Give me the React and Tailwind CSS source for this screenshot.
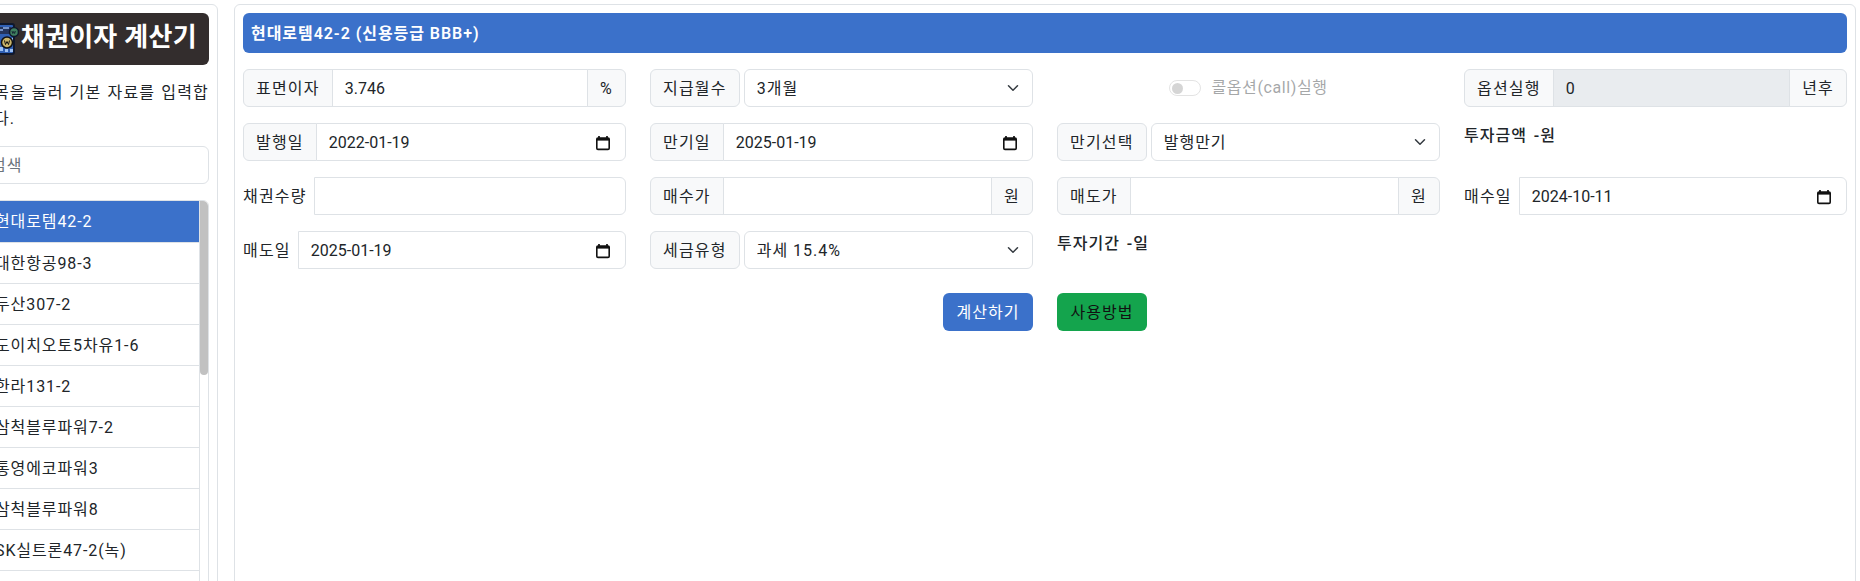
const BONDS = ["현대로템42-2", "대한항공98-3", "두산307-2", "도이치오토5차유1-6", "한라131-2", "삼척블루파워7-2", "통영에코파워3", "삼척블루파워8", "SK실트론47-2(녹)", "한화솔루션283-2"];

const box = "h-[38px] border border-[#dee2e6] bg-white pt-px";
const addon = "flex h-[38px] shrink-0 items-center border border-[#dee2e6] bg-[#f8f9fa] px-3 pt-px tracking-[1.2px]";

function CalendarIcon() {
  return (
    <svg width="16" height="16" viewBox="0 0 16 16" className="shrink-0">
      <path d="M4 1v2M12 1v2" stroke="#000" strokeWidth="1.6" />
      <rect x="1.8" y="3" width="12.4" height="11.4" rx="1.2" fill="none" stroke="#111" strokeWidth="1.6" />
      <rect x="1.8" y="3" width="12.4" height="2.6" fill="#111" />
    </svg>
  );
}

function Chevron() {
  return (
    <svg width="16" height="12" viewBox="0 0 16 16" className="pointer-events-none absolute right-3 top-[13px]">
      <path d="m2 5 6 6 6-6" fill="none" stroke="#343a40" strokeWidth="2" strokeLinecap="round" strokeLinejoin="round" />
    </svg>
  );
}

function Select({ label, value }) {
  return (
    <div className="flex gap-1">
      <span className={addon + " rounded-md"}>{label}</span>
      <div className="relative min-w-0 flex-1">
        <select defaultValue={value} className={box + " w-full appearance-none rounded-md pl-3 pr-9 tracking-[1px] outline-none"}>
          <option>{value}</option>
        </select>
        <Chevron />
      </div>
    </div>
  );
}

function DateBox({ value, className }) {
  return (
    <div className={box + " flex min-w-0 flex-1 items-center justify-between pl-3 pr-[14px] " + className}>
      <input readOnly value={value} className="w-[120px] bg-transparent outline-none" />
      <CalendarIcon />
    </div>
  );
}

function Joined({ label, value, unit, disabled }) {
  return (
    <div className="flex">
      <span className={addon + " rounded-l-md"}>{label}</span>
      <input
        readOnly
        value={value}
        className={"-ml-px h-[38px] min-w-0 flex-1 border border-[#dee2e6] px-3 pt-px outline-none " + (disabled ? "bg-[#e9ecef]" : "bg-white") + (unit ? "" : " rounded-r-md")}
      />
      {unit && <span className={addon + " -ml-px rounded-r-md"}>{unit}</span>}
    </div>
  );
}

function JoinedDate({ label, value }) {
  return (
    <div className="flex">
      <span className={addon + " rounded-l-md"}>{label}</span>
      <DateBox value={value} className="-ml-px rounded-r-md" />
    </div>
  );
}

function Plain({ label, children }) {
  return (
    <div className="flex items-center gap-[7px]">
      <span className="shrink-0 pt-px tracking-[1.2px]">{label}</span>
      {children}
    </div>
  );
}

function Logo() {
  return (
    <svg width="40" height="32" viewBox="0 0 40 32" className="shrink-0">
      <rect x="3" y="1" width="32" height="30" rx="2" fill="#2f5fb3" stroke="#10182c" strokeWidth="2" />
      <rect x="8" y="4" width="24" height="7" fill="#24345c" />
      <path d="M16 7h8M24 5h6" stroke="#8fb0e8" strokeWidth="1.5" />
      <path d="M8 24h4v4H8zM14 24h4v4h-4zM20 24h4v4h-4zM26 26h3v3h-3zM31 26h3v3h-3zM31 15h3v4h-3z" fill="#9cc0f2" />
      <circle cx="28" cy="19.500" r="5.500" fill="#c9b46a" stroke="#111" strokeWidth="1.500" />
      <path d="M25.500 17.500l1 4 1.500-3 1.500 3 1-4" fill="none" stroke="#111" strokeWidth="1" />
      <circle cx="35" cy="9" r="4.500" fill="#3f7f5f" stroke="#10182c" strokeWidth="1.500" />
      <path d="M33 8l.8 2.500.9-2 .9 2 .8-2.500" fill="none" stroke="#10182c" strokeWidth="0.8" />
    </svg>
  );
}

function Sidebar() {
  return (
    <aside className="-ml-[31px] h-[700px] w-[249px] shrink-0 rounded-md border border-[#dee2e6] bg-white p-2">
      <div className="flex h-[52px] items-center justify-end rounded-md bg-[#332d2d] pr-[12px]">
        <Logo />
        <span className="mb-[3px] ml-[2px] whitespace-nowrap text-[26px] font-bold tracking-[0.3px] text-white">채권이자 계산기</span>
      </div>
      <p className="mt-[15px] text-justify leading-[26px] tracking-[1.2px]">항목을 눌러 기본 자료를 입력합니다.</p>
      <input placeholder="검색" className={box + " mt-[14px] block w-full rounded-md px-3 tracking-[1px] outline-none placeholder:text-[#6c757d]"} />
      <div className="mt-4 flex overflow-hidden rounded-md border border-[#dee2e6]">
        <ul className="min-w-0 flex-1 border-r border-[#dee2e6]">
          {BONDS.map((b, i) => (
            <li
              key={b}
              className={"border-b border-[#dee2e6] px-4 pb-2 pt-[9px] tracking-[0.9px] " + (i === 0 ? "h-[42px] bg-[#3b71ca] text-white" : "h-[41px]")}
            >
              {b}
            </li>
          ))}
        </ul>
        <div className="w-2 shrink-0 bg-white">
          <div className="h-[174px] rounded-b-md bg-[#c1c1c1]" />
        </div>
      </div>
    </aside>
  );
}

export default function App() {
  return (
    <div className="flex h-[581px] gap-4 overflow-hidden bg-white pt-1 font-['Roboto','Noto_Sans_CJK_KR',sans-serif] text-base text-[#212529]">
      <Sidebar />
      <main className="mr-1 h-[700px] min-w-0 flex-1 rounded-md border border-[#dee2e6] bg-white p-2">
        <div className="flex h-10 items-center rounded-md bg-[#3b71ca] px-2 pt-px font-semibold tracking-[0.95px] text-white">
          현대로템42-2 (신용등급 BBB+)
        </div>
        <div className="mt-4 grid grid-cols-4 gap-x-6 gap-y-4">
          <Joined label="표면이자" value="3.746" unit="%" />
          <Select label="지급월수" value="3개월" />
          <div className="flex items-center justify-center gap-[10px] opacity-40">
            <span className="flex h-4 w-8 items-center rounded-full border border-[#bbb] px-[2px]">
              <span className="h-[11px] w-[11px] rounded-full bg-[#999]" />
            </span>
            <span className="tracking-[0.6px]">콜옵션(call)실행</span>
          </div>
          <Joined label="옵션실행" value="0" unit="년후" disabled />

          <JoinedDate label="발행일" value="2022-01-19" />
          <JoinedDate label="만기일" value="2025-01-19" />
          <Select label="만기선택" value="발행만기" />
          <div className="h-[38px] pt-px font-medium tracking-[1px] [word-spacing:2px]">투자금액 -원</div>

          <Plain label="채권수량">
            <input className={box + " min-w-0 flex-1 rounded-r-md outline-none"} />
          </Plain>
          <Joined label="매수가" value="" unit="원" />
          <Joined label="매도가" value="" unit="원" />
          <Plain label="매수일">
            <DateBox value="2024-10-11" className="rounded-r-md" />
          </Plain>

          <Plain label="매도일">
            <DateBox value="2025-01-19" className="rounded-r-md" />
          </Plain>
          <Select label="세금유형" value="과세 15.4%" />
          <div className="h-[38px] pt-px font-medium tracking-[1px] [word-spacing:2px]">투자기간 -일</div>
          <div />

          <div />
          <div className="mt-2 flex justify-end">
            <button className="h-[38px] w-[90px] rounded-md bg-[#3b71ca] pt-px tracking-[1px] text-white">계산하기</button>
          </div>
          <div className="mt-2">
            <button className="h-[38px] w-[90px] rounded-md bg-[#14a44d] pt-px tracking-[1px] text-[#111]">사용방법</button>
          </div>
        </div>
      </main>
    </div>
  );
}
